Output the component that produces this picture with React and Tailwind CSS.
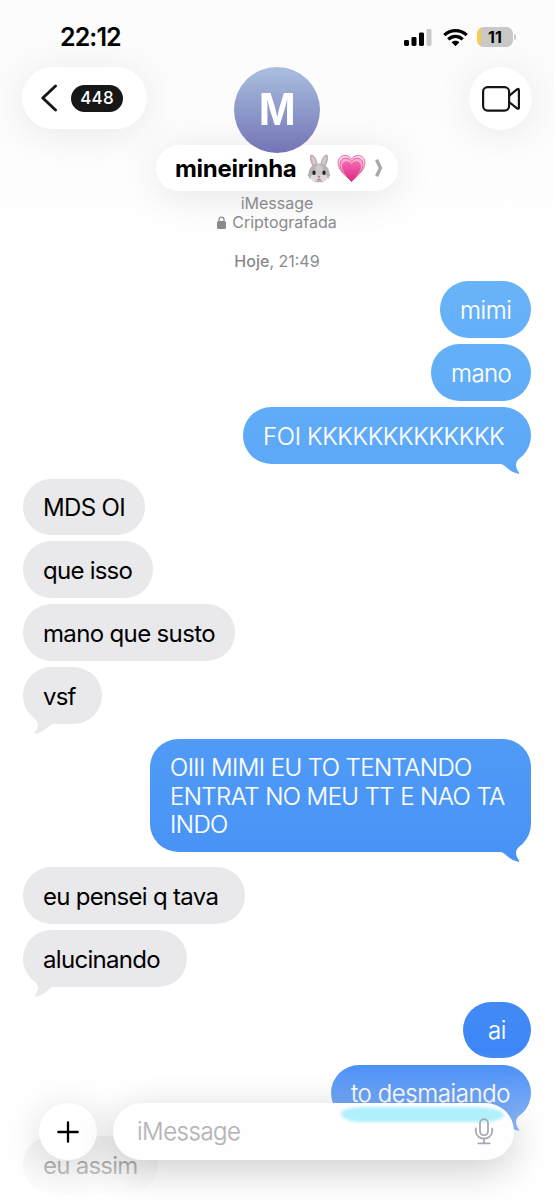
import React from 'react';

const groups = [
  {
    sent: true,
    items: [
      { text: 'mimi', box: 'w-[91px] bg-linear-to-b from-[#69b3f7] to-[#64affa]', track: 'tracking-[-0.45px]' },
      { text: 'mano', box: 'w-[100px] bg-linear-to-b from-[#64b0f8] to-[#60acf7]', track: 'tracking-[-0.55px]' },
      { text: 'FOI KKKKKKKKKKKKK', box: 'w-[288px] bg-linear-to-b from-[#60acf7] to-[#5da8f7]', track: 'tracking-[-0.35px]' },
    ],
  },
  {
    sent: false,
    items: [
      { text: 'MDS OI', box: 'w-[122px] bg-[#e9e9eb]', track: 'tracking-[-0.65px]' },
      { text: 'que isso', box: 'w-[130px] bg-[#e9e9eb]', track: 'tracking-[-0.75px]' },
      { text: 'mano que susto', box: 'w-[212px] bg-[#e9e9eb]', track: 'tracking-[-0.65px]' },
      { text: 'vsf', box: 'w-[79px] bg-[#e9e9eb]', track: 'tracking-[-0.85px]' },
    ],
  },
  {
    sent: true,
    items: [
      {
        text: 'OIII MIMI EU TO TENTANDO\nENTRAT NO MEU TT E NAO TA\nINDO',
        box: 'w-[381px] bg-linear-to-b from-[#4f9bf6] to-[#4993f6]',
        track: 'tracking-[-0.57px]',
      },
    ],
  },
  {
    sent: false,
    items: [
      { text: 'eu pensei q tava', box: 'w-[222px] bg-[#e9e9eb]', track: 'tracking-[-0.7px]' },
      { text: 'alucinando', box: 'w-[164px] bg-[#e9e9eb]', track: 'tracking-[-0.7px]' },
    ],
  },
  {
    sent: true,
    items: [
      { text: 'ai', box: 'w-[68px] text-center bg-linear-to-b from-[#418af5] to-[#3d86f8]', track: 'tracking-[-0.5px]' },
      { text: 'to desmaiando', box: 'w-[200px] bg-[#3d87f6]', track: 'tracking-[-0.4px]' },
    ],
  },
  {
    sent: false,
    items: [{ text: 'eu assim', box: 'w-[135px] bg-[#e9e9eb]', track: 'tracking-[-0.75px]', noTail: true }],
  },
];

const tailColors = ['text-[#5da8f7]', 'text-[#e9e9eb]', 'text-[#4993f6]', 'text-[#e9e9eb]', 'text-[#3d87f6]', 'text-[#e9e9eb]'];

function Tail({ sent, color }) {
  return (
    <svg
      className={`absolute -bottom-[10px] ${sent ? 'right-0' : 'left-0 -scale-x-100'} ${color}`}
      width="34"
      height="22"
      viewBox="0 0 34 22"
      fill="currentColor"
    >
      <path d="M3 12C8.5 12 11 20 21.2 21.7C22.6 21.8 22.4 20.9 21.7 20C18.4 15.5 17.6 10.3 22.5 6.3L16 3Z" />
    </svg>
  );
}

function Bubble({ message, sent, tail, color }) {
  return (
    <div
      className={`relative rounded-[28.3px] px-5 pt-[15.6px] pb-[12.4px] text-[24px] leading-[28.6px] whitespace-pre ${sent ? 'text-white font-light [-webkit-text-stroke:0.2px_white]' : 'text-black'} ${message.box} ${message.track}`}
    >
      {message.text}
      {tail && <Tail sent={sent} color={color} />}
    </div>
  );
}

function StatusBar() {
  return (
    <div className="flex h-[67px] items-start justify-between pt-[22px] pr-[38px] pl-[60px]">
      <span className="text-[25px] leading-[30px] font-semibold tracking-[-0.9px]">22:12</span>
      <div className="flex items-center pt-[5px]">
        <svg width="28" height="19" viewBox="0 0 28 19">
          <rect x="0" y="12" width="5" height="6" rx="1.4" />
          <rect x="7.5" y="9" width="5" height="9" rx="1.4" />
          <rect x="15" y="4.5" width="5" height="13.5" rx="1.4" />
          <rect x="22.5" y="1" width="5" height="17" rx="1.4" fill="#c9c9c9" />
        </svg>
        <svg className="ml-[11px]" width="25" height="19" viewBox="0 0 25 19" fill="none" stroke="#000" strokeWidth="3.3">
          <path d="M1.3 7.1C7.7 1 17.3 1 23.7 7.1" />
          <path d="M5.3 11.4C9.5 7.4 15.5 7.4 19.7 11.4" />
          <path d="M8.6 14.3C10.8 12.3 14.2 12.3 16.4 14.3L12.5 18.2Z" fill="#000" stroke="none" />
        </svg>
        <div className="ml-[9px] flex h-[20px] w-[36px] items-center justify-center overflow-hidden rounded-[6.5px] bg-linear-to-r from-[#f6cb50] from-[11%] to-[#c8c8c8] to-[11%] text-[16px] leading-none font-bold tracking-[0.2px]">
          11
        </div>
        <div className="ml-[1px] h-[6px] w-[2px] rounded-r-full bg-[#c8c8c8]" />
      </div>
    </div>
  );
}

function RabbitIcon() {
  return (
    <svg width="26" height="29" viewBox="0 0 26 29">
      <path d="M7.5 13C4.4 8 4 3 4.8 1.3C6.5-.2 10.6 4.3 11.2 11M14.8 11C15.4 4.3 19.5-.2 21.2 1.3C22 3 21.6 8 18.5 13" fill="#c4bbbe" stroke="#a0979a" strokeWidth=".7" />
      <path d="M8.6 11C6.4 7 5.6 4 6.2 3C7.7 3.1 9.6 7.3 9.9 11M16.1 11C16.4 7.3 18.3 3.1 19.8 3C20.4 4 19.6 7 17.4 11" fill="#e3c9d1" />
      <path d="M13 9.5C6.5 9.5 3 14 2.5 19L1.6 22L3 22.3L2.7 24.5L5.1 24.2C7 27.6 10 28.3 13 28.3S19 27.6 20.9 24.2L23.3 24.5L23 22.3L24.4 22L23.5 19C23 14 19.5 9.5 13 9.5Z" fill="#b9b2b5" />
      <ellipse cx="13" cy="16" rx="3.8" ry="5.7" fill="#cdc8ca" />
      <ellipse cx="9" cy="23.8" rx="4.3" ry="3.3" fill="#dedadb" />
      <ellipse cx="17" cy="23.8" rx="4.3" ry="3.3" fill="#dedadb" />
      <ellipse cx="8" cy="18.7" rx="1.6" ry="2.3" fill="#252124" />
      <ellipse cx="18" cy="18.7" rx="1.6" ry="2.3" fill="#252124" />
      <path d="M11.3 22.3Q13 21.6 14.7 22.3L13 24.3Z" fill="#c76f83" />
      <path d="M11 26Q13 24 15 26" fill="none" stroke="#71676a" strokeWidth=".8" />
    </svg>
  );
}

function HeartIcon() {
  return (
    <svg width="29" height="29" viewBox="0 0 29 29">
      <defs>
        <linearGradient id="heart" x1="0" y1="0" x2="0" y2="1">
          <stop offset="0" stopColor="#f668ae" />
          <stop offset="1" stopColor="#d92a86" />
        </linearGradient>
      </defs>
      <path d="M14.5 27.5C8 21 1 16 1 8.8C1 .2 11.2-.8 14.5 5.2C17.8-.8 28 .2 28 8.8C28 16 21 21 14.5 27.5Z" fill="#fbd5e7" stroke="#e673aa" strokeWidth="1" />
      <path d="M14.5 27.5C8 21 3 16.6 3 10.4C3 3.2 11.6 2.3 14.5 7.6C17.4 2.3 26 3.2 26 10.4C26 16.6 21 21 14.5 27.5Z" fill="#f7abcf" stroke="#e05b9b" strokeWidth="1" />
      <path d="M14.5 27.8C9.5 22 5 17.6 5 12.3C5 6.5 12 5.4 14.5 10C17 5.4 24 6.5 24 12.3C24 17.6 19.5 22 14.5 27.8Z" fill="url(#heart)" />
    </svg>
  );
}

function Header() {
  return (
    <header className="flex h-[124px] items-start pl-[22px]">
      <button className="flex h-[62px] w-[125px] items-center rounded-full bg-white pl-[18px] shadow-[0_5px_40px_rgba(0,0,0,0.085)]">
        <svg width="18" height="28" viewBox="0 0 18 28" fill="none" stroke="#151515" strokeWidth="2.9" strokeLinecap="round" strokeLinejoin="round">
          <path d="M15.5 2L2.8 14L15.5 26" />
        </svg>
        <span className="ml-[13px] flex h-[27px] w-[52px] items-center justify-center rounded-full bg-[#171717] pt-[2px] text-[17px] font-medium tracking-[0.2px] text-white">
          448
        </span>
      </button>
      <div className="ml-[9px] flex w-[242px] flex-col items-center">
        <div className="z-10 flex h-[86px] w-[86px] items-center justify-center rounded-full bg-linear-to-b from-[#a9bfdf] to-[#7474b5] text-[43.5px] font-bold text-white">
          <span className="scale-x-90">M</span>
        </div>
        <div className="-mt-2 flex h-[46px] w-[242px] items-center rounded-full bg-white pl-[19px] shadow-[0_5px_40px_rgba(0,0,0,0.1)]">
          <span className="w-[122px] pt-px text-[24px] leading-[30px] font-bold tracking-[-0.3px] whitespace-nowrap">mineirinha</span>
          <span className="ml-[9px] flex items-center gap-[5px]">
            <RabbitIcon />
            <HeartIcon />
          </span>
          <svg className="ml-[9px]" width="8" height="18" viewBox="0 0 8 18" fill="none" stroke="#a9a9ac" strokeWidth="3.4">
            <path d="M1.6 .8L5.4 9L1.6 17.2" />
          </svg>
        </div>
      </div>
      <button className="ml-[71px] flex h-[63px] w-[63px] items-center justify-center rounded-full bg-white shadow-[0_5px_40px_rgba(0,0,0,0.085)]">
        <svg width="38" height="26" viewBox="0 0 38 26" fill="none" stroke="#151515" strokeWidth="2.2" strokeLinejoin="round">
          <rect x="1.1" y="1.1" width="26" height="23.5" rx="4.5" />
          <path d="M27.1 9.8L35 3.4Q36.9 2.2 36.9 4.2V21.5Q36.9 23.5 35 22.3L27.1 16" />
        </svg>
      </button>
    </header>
  );
}

function Composer() {
  return (
    <div className="absolute inset-x-0 bottom-0 h-[150px] bg-linear-to-b from-white/0 via-white/40 via-50% to-white/95 pt-[53px] pl-[39px]">
      <div className="flex gap-4">
        <button className="flex h-[57px] w-[58px] items-center justify-center rounded-full bg-white shadow-[0_6px_40px_rgba(0,0,0,0.15)]">
          <svg width="22" height="22" viewBox="0 0 22 22" stroke="#000" strokeWidth="2.3" strokeLinecap="round">
            <path d="M11 1.3V20.7M1.3 11H20.7" />
          </svg>
        </button>
        <div className="relative flex h-[57px] w-[401px] items-center justify-between rounded-full bg-[#fefefe] pr-[20px] pl-[24px] shadow-[0_10px_40px_rgba(0,0,0,0.2)]">
          <span className="pt-px text-[24px] leading-none font-light tracking-[-0.5px] text-[#b4b4b6] [-webkit-text-stroke:0.2px_#b4b4b6]">iMessage</span>
          <div className="absolute top-[4px] right-[10px] h-[15px] w-[163px] rounded-[22px_30px_22px_22px/7px_8px_7px_8px] bg-[#b0f0fc] blur-[1.5px]" />
          <svg className="relative" width="20" height="27" viewBox="0 0 20 27" fill="none" stroke="#a5aab0" strokeWidth="1.8" strokeLinecap="round">
            <rect x="6" y="1.2" width="8" height="16" rx="4" />
            <path d="M1.8 10.5V12.5C1.8 23.5 18.2 23.5 18.2 12.5V10.5M10 20.8V25.4M4.5 25.4H15.5" />
          </svg>
        </div>
      </div>
    </div>
  );
}

export default function App() {
  return (
    <div className="relative h-[1200px] w-[554px] overflow-hidden bg-white font-['Inter',sans-serif] text-black">
      <div className="bg-linear-to-b from-[#fcfcfc] from-30% to-white">
        <StatusBar />
        <Header />
        <div className="flex flex-col items-center pt-[3px] text-[16px] leading-[19px] tracking-[0px] text-[#8a8a8e]">
          <span>iMessage</span>
          <span className="flex items-center gap-[6px]">
            <svg width="9" height="13" viewBox="0 0 9 13" fill="#8a8a8e">
              <rect y="5" width="9" height="8" rx="1.5" />
              <path d="M2 6V3.5C2 .4 7 .4 7 3.5V6" fill="none" stroke="#8a8a8e" strokeWidth="1.3" />
            </svg>
            Criptografada
          </span>
          <span className="mt-5">
            <span className="font-medium">Hoje</span>, 21:49
          </span>
        </div>
      </div>
      <main className="flex flex-col gap-[15px] px-[23px] pt-[10.4px]">
        {groups.map((group, i) => (
          <section key={i} className={`flex flex-col gap-[6.25px] ${group.sent ? 'items-end' : 'items-start'}`}>
            {group.items.map((message, j) => (
              <Bubble
                key={message.text}
                message={message}
                sent={group.sent}
                color={tailColors[i]}
                tail={j === group.items.length - 1 && !message.noTail}
              />
            ))}
          </section>
        ))}
      </main>
      <Composer />
    </div>
  );
}
